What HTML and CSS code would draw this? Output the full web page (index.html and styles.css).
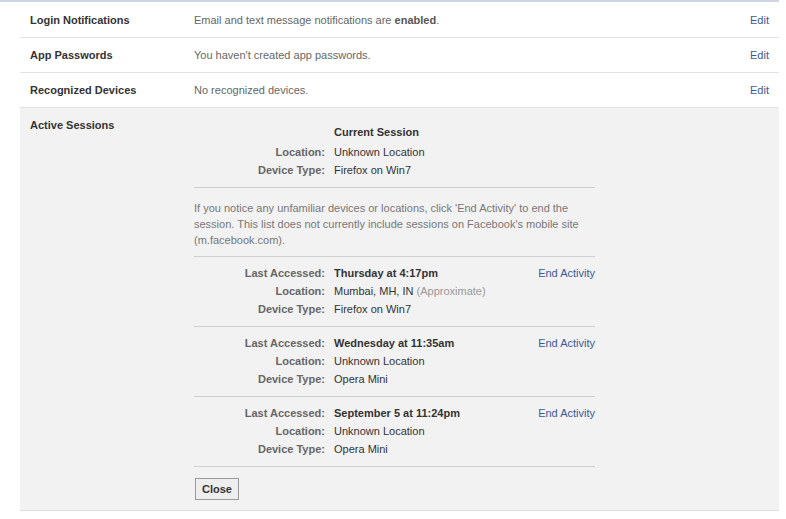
FILE: index.html
```html
<!DOCTYPE html>
<html>
<head>
<meta charset="utf-8">
<link rel="stylesheet" href="styles.css">
</head>
<body>
<div class="topline"></div>
<div class="panel">
  <div class="row">
    <div class="label">Login Notifications</div>
    <div class="desc">Email and text message notifications are <b>enabled</b>.</div>
    <a class="edit">Edit</a>
  </div>
  <div class="row">
    <div class="label">App Passwords</div>
    <div class="desc">You haven't created app passwords.</div>
    <a class="edit">Edit</a>
  </div>
  <div class="row">
    <div class="label">Recognized Devices</div>
    <div class="desc">No recognized devices.</div>
    <a class="edit">Edit</a>
  </div>
  <div class="row open">
    <div class="label">Active Sessions</div>
    <div class="content">
      <div class="current">
        <div class="k"></div><div class="v head">Current Session</div>
        <div class="k">Location:</div><div class="v">Unknown Location</div>
        <div class="k">Device Type:</div><div class="v">Firefox on Win7</div>
      </div>
      <div class="info">If you notice any unfamiliar devices or locations, click 'End Activity' to end the session. This list does not currently include sessions on Facebook's mobile site (m.facebook.com).</div>
      <div class="session">
        <div class="k">Last Accessed:</div><div class="v strong">Thursday at 4:17pm</div><a class="end">End Activity</a>
        <div class="k">Location:</div><div class="v">Mumbai, MH, IN <span class="muted">(Approximate)</span></div><div></div>
        <div class="k">Device Type:</div><div class="v">Firefox on Win7</div><div></div>
      </div>
      <div class="session">
        <div class="k">Last Accessed:</div><div class="v strong">Wednesday at 11:35am</div><a class="end">End Activity</a>
        <div class="k">Location:</div><div class="v">Unknown Location</div><div></div>
        <div class="k">Device Type:</div><div class="v">Opera Mini</div><div></div>
      </div>
      <div class="session">
        <div class="k">Last Accessed:</div><div class="v strong">September 5 at 11:24pm</div><a class="end">End Activity</a>
        <div class="k">Location:</div><div class="v">Unknown Location</div><div></div>
        <div class="k">Device Type:</div><div class="v">Opera Mini</div><div></div>
      </div>
      <div class="actions"><button class="btn">Close</button></div>
    </div>
  </div>
</div>
</body>
</html>
```
FILE: styles.css
```css
html, body {
  margin: 0;
  padding: 0;
  background: #fff;
  font-family: Tahoma, "Liberation Sans", Arial, sans-serif;
  font-size: 11px;
  color: #333;
}
.topline {
  height: 2px;
  width: 779px;
  background: #cdd4e4;
}
.panel {
  margin-left: 20px;
  margin-top: 1px;
  width: 759px;
}
.row {
  display: grid;
  grid-template-columns: 164px 1fr auto;
  align-items: center;
  height: 34px;
  padding: 0 10px;
  border-bottom: 1px solid #e3e3e3;
}
.label {
  font-weight: bold;
  color: #333;
}
.desc {
  color: #666;
}
.desc b {
  color: #555;
}
.edit, .end {
  color: #3b5998;
  cursor: pointer;
}
.row.open {
  height: auto;
  align-items: start;
  background: #f2f2f2;
  padding-top: 10px;
  padding-bottom: 10px;
  border-bottom: 1px solid #e0e0e0;
  grid-template-columns: 164px 401px;
}
.row.open .label {
  line-height: 14px;
}
.content {
  padding-top: 5px;
}
.current, .session {
  display: grid;
  grid-template-columns: 131px auto;
  column-gap: 9px;
  line-height: 18px;
}
.session {
  grid-template-columns: 131px 1fr auto;
  padding: 7px 0 8px;
  border-top: 1px solid #cfcfcf;
}
.current {
  padding-bottom: 8px;
  border-bottom: 1px solid #cfcfcf;
}
.current .head {
  padding-bottom: 2px;
  font-weight: bold;
}
.k {
  text-align: right;
  font-weight: bold;
  color: #666;
}
.v {
  color: #333;
}
.v.strong {
  font-weight: bold;
}
.muted {
  color: #999;
}
.info {
  color: #777;
  line-height: 16px;
  padding: 12px 0 8px;
}
.actions {
  border-top: 1px solid #cfcfcf;
  padding-top: 11px;
}
.btn {
  font-family: inherit;
  font-size: 11px;
  font-weight: bold;
  color: #333;
  background: #eee;
  border: 1px solid #999;
  height: 22px;
  width: 44px;
  margin: 0 0 0 1px;
  padding: 0;
}
```
